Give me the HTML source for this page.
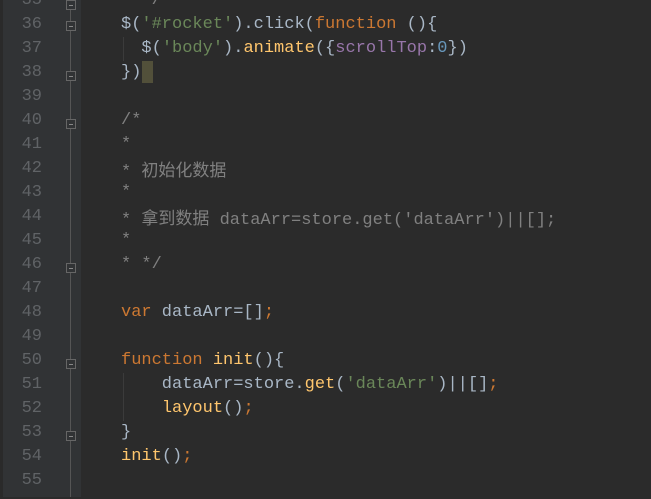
<!DOCTYPE html>
<html><head><meta charset="utf-8"><style>
body{margin:0;width:651px;height:497px;overflow:hidden;background:#2b2b2b;position:relative;font-family:"Liberation Mono","Noto Sans CJK SC",monospace;font-size:17px}
#g{position:absolute;left:0;top:0;width:81px;height:497px;background:#313335}
#s{position:absolute;left:0;top:0;width:3px;height:497px;background:#2a2a2a}
#fl{position:absolute;left:70px;top:0;width:1px;height:497px;background:#555}
#w{position:absolute;left:0;top:2px;width:651px;height:497px}
.n{position:absolute;left:0;width:42px;text-align:right;color:#606366;height:24px;line-height:24px}
.l{position:absolute;left:121px;height:24px;line-height:24px;white-space:pre;color:#a9b7c6}
.k{color:#cc7832}.s{color:#6a8759}.f{color:#ffc66d}.c{color:#808080}.p{color:#9876aa}.m{color:#6897bb}
.cj{font-family:"Noto Sans CJK SC",sans-serif;font-size:17px}
.fm{position:absolute;left:66px;width:8px;height:8px;border:1px solid #666;background:#313335}
.fm:after{content:"";position:absolute;left:2px;top:4px;width:4px;height:1px;background:#888}
.ig{position:absolute;left:123px;width:1px;background:#3b3b3b}
</style></head><body>
<div id="g"></div><div id="s"></div><div id="fl"></div>
<div id="w">
<div class="n" style="top:-13px">35</div>
<div class="n" style="top:11px">36</div>
<div class="n" style="top:35px">37</div>
<div class="n" style="top:59px">38</div>
<div class="n" style="top:83px">39</div>
<div class="n" style="top:107px">40</div>
<div class="n" style="top:131px">41</div>
<div class="n" style="top:155px">42</div>
<div class="n" style="top:179px">43</div>
<div class="n" style="top:203px">44</div>
<div class="n" style="top:227px">45</div>
<div class="n" style="top:251px">46</div>
<div class="n" style="top:275px">47</div>
<div class="n" style="top:299px">48</div>
<div class="n" style="top:323px">49</div>
<div class="n" style="top:347px">50</div>
<div class="n" style="top:371px">51</div>
<div class="n" style="top:395px">52</div>
<div class="n" style="top:419px">53</div>
<div class="n" style="top:443px">54</div>
<div class="n" style="top:467px">55</div>
<div class="fm" style="top:-2px"></div>
<div class="fm" style="top:19px"></div>
<div class="fm" style="top:69px"></div>
<div class="fm" style="top:117px"></div>
<div class="fm" style="top:261px"></div>
<div class="fm" style="top:357px"></div>
<div class="fm" style="top:429px"></div>
<div class="ig" style="top:35px;height:24px"></div>
<div class="ig" style="top:371px;height:48px"></div>
<div style="position:absolute;left:142px;top:59px;width:11px;height:22px;background:#52503a"></div>
<div class="l c" style="top:-13px">  */</div>
<div class="l" style="top:11px">$(<span class="s">'#rocket'</span>).click(<span class="k">function</span> (){</div>
<div class="l" style="top:35px">  $(<span class="s">'body'</span>).<span class="f">animate</span>({<span class="p">scrollTop</span>:<span class="m">0</span>})</div>
<div class="l" style="top:59px">})</div>
<div class="l c" style="top:107px">/*</div>
<div class="l c" style="top:131px">*</div>
<div class="l c" style="top:155px">* <span class="cj">初始化数据</span></div>
<div class="l c" style="top:179px">*</div>
<div class="l c" style="top:203px">* <span class="cj">拿到数据</span> dataArr=store.get('dataArr')||[];</div>
<div class="l c" style="top:227px">*</div>
<div class="l c" style="top:251px">* */</div>
<div class="l" style="top:299px"><span class="k">var</span> dataArr=[]<span class="k">;</span></div>
<div class="l" style="top:347px"><span class="k">function</span> <span class="f">init</span>(){</div>
<div class="l" style="top:371px">    dataArr=store.<span class="f">get</span>(<span class="s">'dataArr'</span>)||[]<span class="k">;</span></div>
<div class="l" style="top:395px">    <span class="f">layout</span>()<span class="k">;</span></div>
<div class="l" style="top:419px">}</div>
<div class="l" style="top:443px"><span class="f">init</span>()<span class="k">;</span></div>
</div>
</body></html>
